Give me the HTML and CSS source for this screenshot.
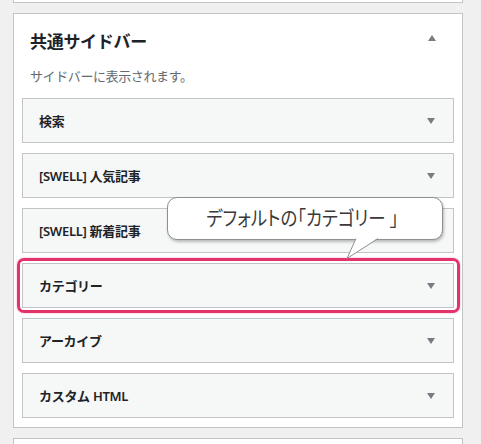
FILE: index.html
```html
<!DOCTYPE html>
<html lang="ja">
<head>
<meta charset="utf-8">
<link rel="stylesheet" href="styles.css">
</head>
<body>
<div class="page">
  <div class="card card-top"></div>
  <div class="card main">
    <div class="head">
      <h2 class="title">共通サイドバー</h2>
      <span class="arrow up"></span>
    </div>
    <p class="desc">サイドバーに表示されます。</p>
    <div class="widgets">
      <div class="widget"><span class="label">検索</span><span class="arrow down"></span></div>
      <div class="widget"><span class="label">[SWELL] 人気記事</span><span class="arrow down"></span></div>
      <div class="widget"><span class="label">[SWELL] 新着記事</span><span class="arrow down"></span></div>
      <div class="widget marked"><span class="label">カテゴリー</span><span class="arrow down"></span><span class="highlight"></span></div>
      <div class="widget"><span class="label">アーカイブ</span><span class="arrow down"></span></div>
      <div class="widget"><span class="label">カスタム HTML</span><span class="arrow down"></span></div>
    </div>
    <div class="bubble">
      <span class="bubble-text">デフォルトの「カテゴリー<span class="close">」</span></span>
      <svg class="tail" width="36" height="22" viewBox="0 0 36 22">
        <path d="M11 0 L2 20.5 L33 0 Z" fill="#fff"/>
        <path d="M11 0.5 L2 20.5 L33 0.5" fill="none" stroke="#8f8f8f" stroke-width="1"/>
      </svg>
    </div>
  </div>
  <div class="card card-bottom"></div>
</div>
</body>
</html>
```

FILE: styles.css
```css
html, body {
  margin: 0;
  padding: 0;
  background: #f0f0f1;
  height: 444px;
  overflow: hidden;
}
.page {
  display: flex;
  flex-direction: column;
  gap: 10px;
  padding: 0 18px 0 13px;
  font-family: "Noto Sans", "Noto Sans CJK JP", sans-serif;
  color: #1d2327;
}
.card {
  background: #fff;
  border: 1px solid #c3c4c7;
}
.card-top {
  height: 2px;
  border-top: none;
}
.card-bottom {
  height: 20px;
  border-bottom: none;
}
.main {
  position: relative;
  padding: 16px 8px 9px 8px;
  display: flex;
  flex-direction: column;
}
.head {
  display: flex;
  align-items: center;
  justify-content: space-between;
  padding: 0 18px 0 8px;
  height: 24px;
}
.title {
  margin: 0;
  font-size: 17px;
  font-weight: 700;
  line-height: 24px;
  letter-spacing: -0.3px;
}
.desc {
  margin: 12px 0 12px 8px;
  font-size: 13px;
  line-height: 20px;
  color: #646970;
  letter-spacing: -0.4px;
}
.widgets {
  display: flex;
  flex-direction: column;
  gap: 10px;
}
.widget {
  position: relative;
  display: flex;
  align-items: center;
  justify-content: space-between;
  height: 43px;
  padding: 0 18px 0 16px;
  background: #f6f7f7;
  border: 1px solid #c3c4c7;
}
.label {
  font-size: 13px;
  font-weight: 600;
  letter-spacing: -0.3px;
}
.arrow {
  width: 0;
  height: 0;
  border-left: 4px solid transparent;
  border-right: 4px solid transparent;
}
.arrow.down {
  border-top: 6px solid #787c82;
}
.arrow.up {
  border-bottom: 6px solid #787c82;
  margin-top: -8px;
}
.highlight {
  position: absolute;
  top: -6px;
  bottom: -6px;
  left: -6px;
  right: -7px;
  border: 3px solid #e2336b;
  border-radius: 7px;
  box-shadow: 0 0 2px rgba(226, 51, 107, 0.5);
}
.bubble {
  position: absolute;
  left: 153px;
  top: 183px;
  width: 274px;
  height: 41px;
  background: #fff;
  border: 1px solid #8f8f8f;
  border-radius: 10px;
  box-shadow: 1px 2px 3px rgba(0, 0, 0, 0.25);
  display: flex;
  align-items: center;
  justify-content: center;
}
.bubble-text {
  font-family: "Noto Sans CJK JP", sans-serif;
  font-size: 20px;
  font-weight: 400;
  line-height: 24px;
  color: #3a3a3a;
  font-feature-settings: "palt";
  white-space: nowrap;
  transform: scaleX(0.87);
  margin: -2px 6px 0 0;
}
.close {
  margin-left: 5px;
}
.tail {
  position: absolute;
  left: 177px;
  top: 40px;
}
```
